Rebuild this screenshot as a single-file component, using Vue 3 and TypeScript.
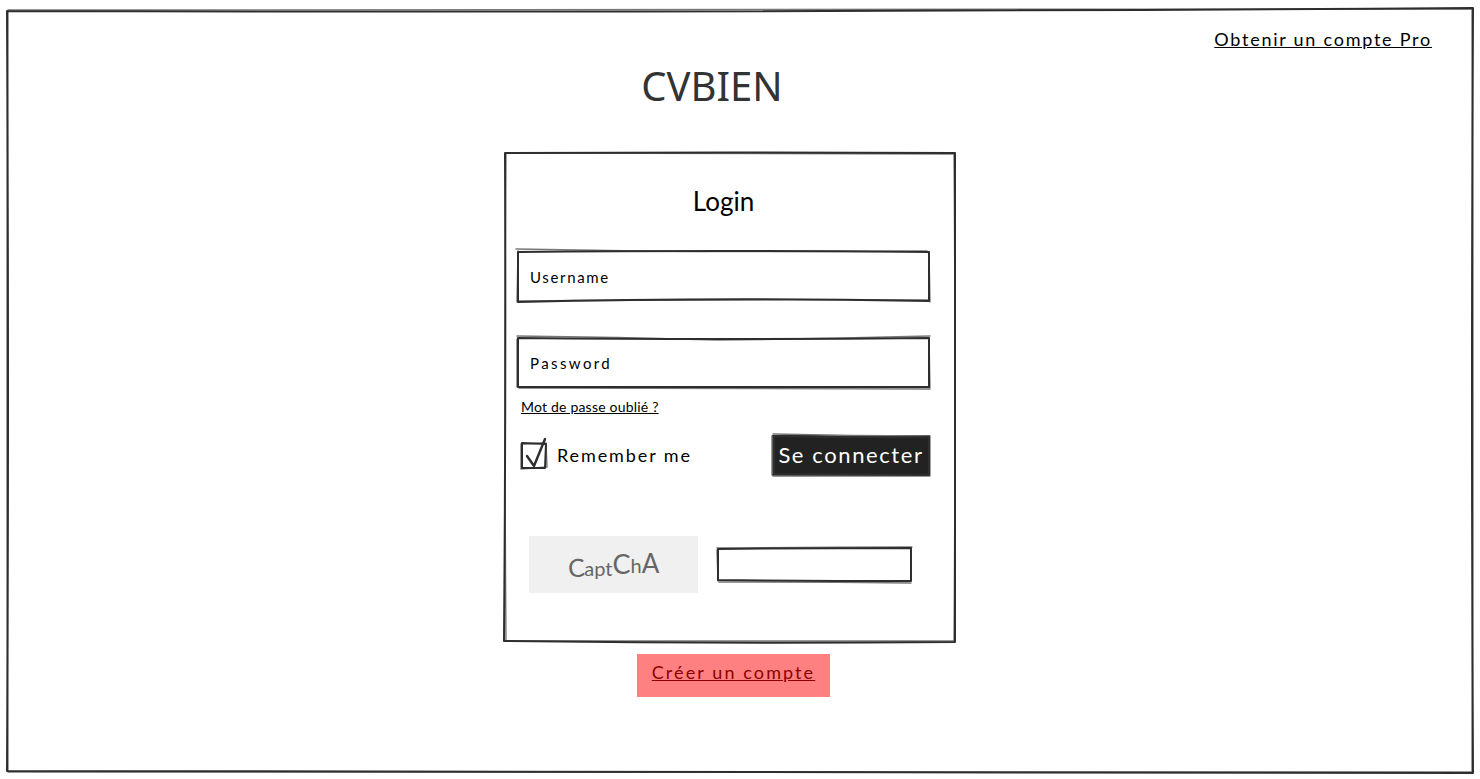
<script setup lang="ts">
import { ref } from "vue";

const remember = ref(true);

// hand drawn outlines, each one is a main stroke and a fainter second pass
const sketch = {
  page: {
    main: "M7 11 Q 700 13 1473 8 Q 1471 400 1473 773 Q 700 775 7 771 Q 9 400 7 11",
    pass: "M8 10 Q 700 11 1472 9 M1472 9 Q 1474 400 1472 772 M1472 772 Q 700 773 8 772 M8 772 Q 6 400 8 10",
  },
  card: {
    main: "M0 0 Q 225 -1 450 0 Q 449 240 450 489 Q 225 491 -1 488 Q 1 240 0 0",
    pass: "M1 0 Q 225 1 449 1 M449 1 Q 451 240 449 488 M449 488 Q 225 488 1 488 M1 488 Q -1 240 1 0",
  },
  input: {
    main: "M1 1 Q 200 -1 412 1 L 412 50 Q 200 46 1 51 Z",
    pass: "M-1 -2 Q 200 2 410 0 M412 1 L 413 51 M413 49 Q 200 48 2 50 M1 0 L 0 51",
  },
  inputAlt: {
    main: "M1 1 Q 200 3 412 1 L 412 50 Q 200 50 1 50 Z",
    pass: "M0 -1 Q 100 0 200 3 Q 300 2 413 -1 M412 1 L 413 51 M413 52 Q 200 51 2 51 M0 2 L 0 50",
  },
  button: {
    main: "M2 1 Q 80 3 157 2 L 157 40 L 2 39 Z",
    pass: "M1 -1 Q 80 1 157 1 M0 1 L 0 40 M1 41 Q 80 41 158 41 M158 1 L 158 41",
  },
  captcha: {
    main: "M1 1 Q 100 0 194 0 L 194 33 Q 100 33 1 32 Z",
    pass: "M0 2 L 1 33 M2 34 Q 100 34 194 35 M0 0 Q 100 -1 195 -1",
  },
};
</script>

<template>
  <div class="page">
    <svg class="outline" viewBox="0 0 1480 779">
      <path class="pass" :d="sketch.page.pass" />
      <path class="main" :d="sketch.page.main" />
    </svg>

    <div class="top-bar">
      <a class="pro-link" href="#">Obtenir un compte Pro</a>
    </div>

    <div class="column">
      <h1 class="brand">CVBIEN</h1>

      <form class="card" @submit.prevent>
        <svg class="outline" viewBox="0 0 450 489">
          <path class="pass" :d="sketch.card.pass" />
          <path class="main" :d="sketch.card.main" />
        </svg>

        <h2 class="title">Login</h2>

        <!-- Username / password -->
        <div class="field">
          <input class="input" type="text" placeholder="Username" />
          <svg class="outline" viewBox="0 0 413 51">
            <path class="pass" :d="sketch.input.pass" />
            <path class="main" :d="sketch.input.main" />
          </svg>
        </div>
        <div class="field second">
          <input class="input password" type="text" placeholder="Password" />
          <svg class="outline" viewBox="0 0 413 51">
            <path class="pass" :d="sketch.inputAlt.pass" />
            <path class="main" :d="sketch.inputAlt.main" />
          </svg>
        </div>
        <a class="forgot" href="#">Mot de passe oublié ?</a>

        <div class="actions">
          <label class="remember" @click="remember = !remember">
            <svg class="check" width="30" height="36" viewBox="0 0 30 36">
              <path class="pass" d="M1 7 L 26 6 L 27 30 L 1 32 Z" />
              <path class="main" d="M2 6 L 26 7 L 25 31 L 2 31 Z" />
              <path v-if="remember" class="tick" d="M7 19 L 14 29 L 25 2" />
            </svg>
            <span>Remember me</span>
          </label>
          <div class="submit">
            <button class="button" type="submit">Se connecter</button>
            <svg class="outline" viewBox="0 0 158 41">
              <path class="pass" :d="sketch.button.pass" />
              <path class="main" :d="sketch.button.main" />
            </svg>
          </div>
        </div>

        <div class="captcha-row">
          <div class="captcha">
            <span class="c1">C</span><span class="c2">apt</span><span class="c3">C</span><span class="c4">h</span><span class="c5">A</span>
          </div>
          <div class="captcha-field">
            <input class="captcha-input" type="text" />
            <svg class="outline" viewBox="0 0 195 34">
              <path class="pass" :d="sketch.captcha.pass" />
              <path class="main" :d="sketch.captcha.main" />
            </svg>
          </div>
        </div>
      </form>

      <div class="create">
        <a href="#">Créer un compte</a>
      </div>
    </div>
  </div>
</template>

<style>
html,
body {
  margin: 0;
  background: #fff;
}
</style>

<style scoped>
.page {
  position: relative;
  width: 1480px;
  height: 779px;
  overflow: hidden;
  font-family: "Lato", "Liberation Sans", sans-serif;
  color: #000;
}

/* sketch outlines */
.outline {
  position: absolute;
  left: 0;
  top: 0;
  width: 100%;
  height: 100%;
  overflow: visible;
  pointer-events: none;
}

.main,
.pass {
  fill: none;
  stroke-linecap: round;
  stroke-linejoin: round;
}

.main {
  stroke: #2e2e2e;
  stroke-width: 2;
}

.pass {
  stroke: #777;
  stroke-width: 1.4;
}

.top-bar {
  display: flex;
  justify-content: flex-end;
  padding: 28px 48px 0 0;
}

.pro-link {
  font-size: 18px;
  line-height: 22px;
  letter-spacing: 1.75px;
  color: #000;
  text-decoration: underline;
}

.column {
  display: flex;
  flex-direction: column;
  width: 450px;
  margin-left: 505px;
}

.brand {
  margin: 10px 0 0;
  padding-right: 36px;
  font-family: "Noto Sans", sans-serif;
  font-size: 40px;
  font-weight: 400;
  line-height: 52px;
  color: #333;
  text-align: center;
}

.card {
  position: relative;
  box-sizing: border-box;
  width: 450px;
  height: 489px;
  margin-top: 41px;
  padding: 30px 25px 0 12px;
}

.title {
  margin: 0 0 32px;
  font-size: 26px;
  font-weight: 400;
  line-height: 36px;
  text-align: center;
}

.field {
  position: relative;
  height: 51px;
}

.second {
  margin-top: 35px;
}

.input {
  box-sizing: border-box;
  width: 100%;
  height: 100%;
  padding: 0 13px;
  border: none;
  outline: none;
  background: transparent;
  font-family: inherit;
  font-size: 15px;
  letter-spacing: 1.65px;
}

.password {
  letter-spacing: 2.4px;
}

.input::placeholder {
  color: #000;
  opacity: 1;
}

.forgot {
  display: block;
  width: fit-content;
  margin: 10px 0 0 4px;
  font-size: 14px;
  line-height: 18px;
  letter-spacing: 0.2px;
  color: #000;
  text-decoration: underline;
}

.actions {
  display: flex;
  justify-content: space-between;
  align-items: center;
  height: 41px;
  margin-top: 19px;
}

.remember {
  display: flex;
  align-items: center;
  gap: 7px;
  margin-left: 3px;
  padding-bottom: 2px;
  font-size: 18px;
  letter-spacing: 1.9px;
  cursor: pointer;
}

.check {
  flex: none;
  overflow: visible;
}

.tick {
  fill: none;
  stroke: #2e2e2e;
  stroke-width: 2.4;
  stroke-linecap: round;
  stroke-linejoin: round;
}

.submit {
  position: relative;
  width: 158px;
  height: 41px;
}

.button {
  width: 100%;
  height: 100%;
  padding: 0 0 2px;
  border: none;
  background: #222;
  color: #fff;
  font-family: inherit;
  font-size: 22px;
  letter-spacing: 1.6px;
  cursor: pointer;
}

.captcha-row {
  display: flex;
  align-items: center;
  gap: 19px;
  height: 57px;
  margin-top: 60px;
  padding-left: 12px;
}

.captcha {
  display: flex;
  justify-content: center;
  align-items: center;
  width: 169px;
  height: 57px;
  background: #f0f0f0;
  color: #666;
  font-size: 21px;
}

.c1 {
  font-size: 25px;
  transform: translateY(2px) rotate(-4deg);
}

.c2 {
  font-size: 20px;
  transform: translateY(3px);
}

.c3 {
  font-size: 27px;
  transform: translateY(-1px);
}

.c4 {
  font-size: 20px;
}

.c5 {
  font-size: 26px;
  transform: translateY(-2px);
}

.captcha-field {
  position: relative;
  width: 195px;
  height: 34px;
}

.captcha-input {
  box-sizing: border-box;
  width: 100%;
  height: 100%;
  border: none;
  outline: none;
  background: transparent;
}

.create {
  display: flex;
  justify-content: center;
  align-items: center;
  box-sizing: border-box;
  width: 193px;
  height: 43px;
  margin: 12px 0 0 132px;
  padding-bottom: 8px;
  background: #ff8080;
}

.create a {
  font-size: 18px;
  letter-spacing: 2.1px;
  color: #8b0000;
  text-decoration: underline;
}
</style>
